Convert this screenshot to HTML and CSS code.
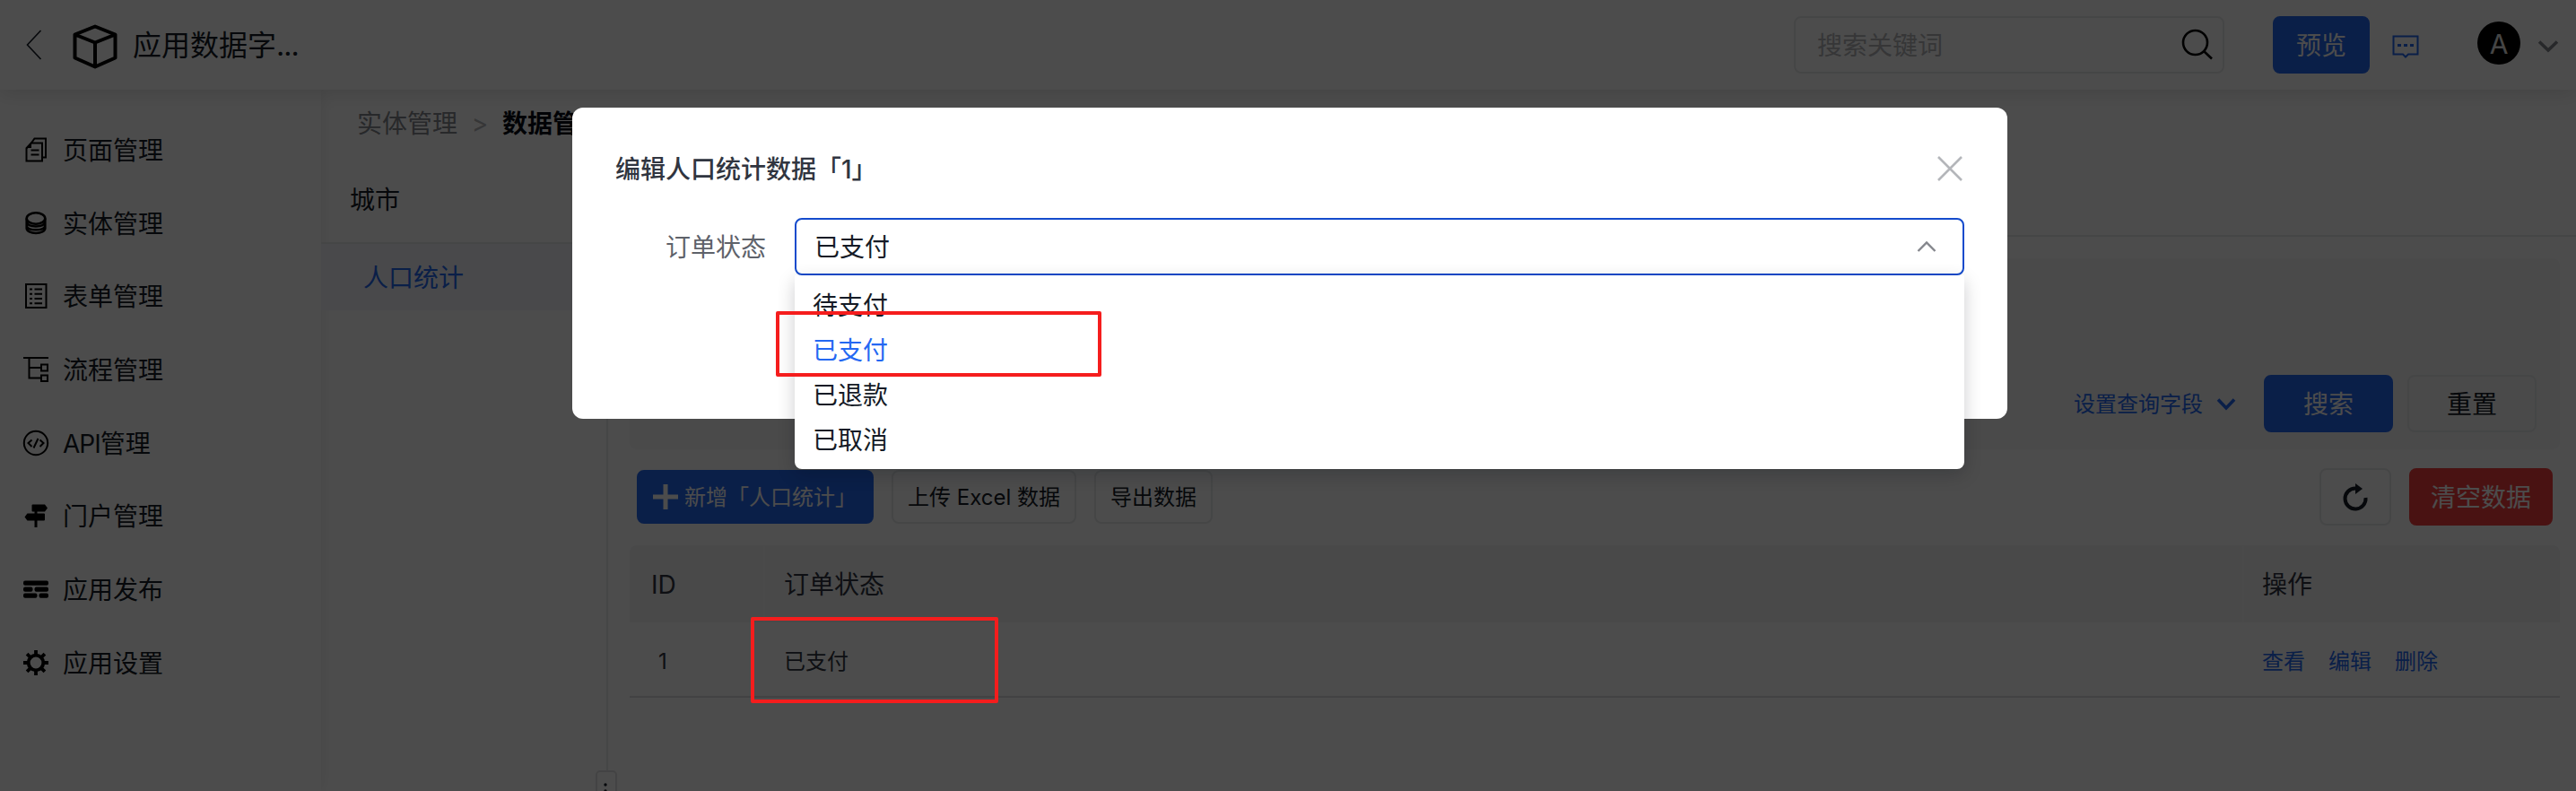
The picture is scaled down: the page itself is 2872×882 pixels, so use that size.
FILE: index.html
```html
<!DOCTYPE html>
<html lang="zh-CN">
<head>
<meta charset="utf-8">
<title>应用数据字典</title>
<link rel="stylesheet" href="styles.css">
</head>
<body>
<div class="app">
  <header class="topbar">
    <svg class="back" viewBox="0 0 18 34"><path d="M16.500 1 1.500 17l15 16"/></svg>
    <svg class="cube" viewBox="0 0 50 50"><path d="M25 2.500 47.500 11.500v26L25 47.500 2.500 37.500v-26zM2.500 11.500 25 20.500l22.500-9M25 20.500v27"/></svg>
    <span class="app-title">应用数据字<span class="tight">...</span></span>
    <div class="search">
      <span>搜索关键词</span>
      <svg viewBox="0 0 36 36"><circle cx="15.500" cy="15.500" r="13.500"/><path d="m25 25 9 8.500"/></svg>
    </div>
    <button class="btn primary preview">预览</button>
    <svg class="message" viewBox="0 0 30 27"><path d="M1.500 1.500h27v20h-10.500l-3 3-3-3h-10.500z"/><path class="dots" d="M6 10h4v3H6zM13 10h4v3h-4zM20 10h4v3h-4z"/></svg>
    <span class="avatar">A</span>
    <svg class="caret" viewBox="0 0 24 16"><path d="m2 2.500 10 9.500 10-9.500"/></svg>
  </header>
  <div class="body">
    <nav class="sidebar">
      <a class="nav-item"><svg viewBox="0 0 28 28"><path d="M8.500 6.500V7L12.500 1.500h12.500v21h-4M9 6.500h12v20H3.500v-14z"/><path class="solid" d="M2.500 12 9 5v7z"/><path d="M8.500 14.500h9M8.500 19.500h9"/></svg><span>页面管理</span></a>
      <a class="nav-item"><svg class="bold" viewBox="0 0 28 28"><ellipse cx="14" cy="8.500" rx="10.300" ry="6.300"/><path d="M3.700 8.500v11c0 3 4.500 5.500 10.300 5.500s10.300-2.500 10.300-5.500v-11M3.700 12.500c1 4 5.500 5 10.300 5s9.300-1 10.300-5M3.700 17c1 3.500 5.500 4.300 10.300 4.300s9.300-.8 10.300-4.300"/></svg><span>实体管理</span></a>
      <a class="nav-item"><svg viewBox="0 0 28 28"><path d="M3 1h22.500v26H3zM7 6.500h3M12.500 6.500H21M7 11.800h3M12.500 11.800H21M7 17h3M12.500 17H21M7 22.300h3M12.500 22.300H21"/></svg><span>表单管理</span></a>
      <a class="nav-item"><svg viewBox="0 0 28 28"><path d="M0 1h28M6.500 1v22.500H20M6.500 12H20M20 8.500h7v7h-7zM20 20.500h7v6.500h-7z"/></svg><span>流程管理</span></a>
      <a class="nav-item"><svg viewBox="0 0 28 28"><circle cx="14" cy="14" r="13.200"/><path d="M9.500 10.500 5.500 14l4 4M18.500 10.500l4 3.500-4 4M16.500 9 11.500 19.500"/></svg><span><span class="tight">API</span>管理</span></a>
      <a class="nav-item"><svg viewBox="0 0 28 28"><path class="solid" d="M10.500 1.500h13.500l3 4-3 4H10.500q-1 0-1-1v-6q0-1 1-1zM4.500 11.500H23q1 0 1 1v6q0 1-1 1H4.500L1.500 15.500zM12.500 8h3v19h-3z"/></svg><span>门户管理</span></a>
      <a class="nav-item"><svg viewBox="0 0 28 28"><g class="solid"><rect y="4.500" width="28" height="5.300" rx="2"/><rect y="11.500" width="10.500" height="5.300" rx="2"/><rect x="12.500" y="11.500" width="15.500" height="5.300" rx="2"/><rect y="18.500" width="15.500" height="5.300" rx="2"/><rect x="17.500" y="18.500" width="10.500" height="5.300" rx="2"/></g></svg><span>应用发布</span></a>
      <a class="nav-item"><svg class="gear" viewBox="0 0 28 28"><circle cx="14" cy="14" r="8.300"/><path d="M14 0v5M14 23v5M0 14h5M23 14h5M4.100 4.100 7.800 7.800M20.200 20.200l3.700 3.700M4.100 23.900l3.700-3.700M20.200 7.800l3.700-3.700"/></svg><span>应用设置</span></a>
    </nav>
    <div class="main">
      <div class="breadcrumb"><span>实体管理</span><i>&gt;</i><b>数据管理</b></div>
      <div class="workspace">
        <aside class="entities">
          <div class="entity-head">城市</div>
          <div class="entity-active">人口统计</div>
          <div class="handle"><svg viewBox="0 0 4 16"><circle cx="2" cy="2" r="1.700"/><circle cx="2" cy="9" r="1.700"/></svg></div>
        </aside>
        <section class="content">
          <div class="tab-strip"></div>
          <div class="query">
            <span class="fields">设置查询字段</span>
            <svg class="fields-caret" viewBox="0 0 22 16"><path d="m2 2.500 9 9.500 9-9.500"/></svg>
            <button class="btn primary wide">搜索</button>
            <button class="btn wide">重置</button>
          </div>
          <div class="toolbar">
            <button class="btn primary small add"><svg viewBox="0 0 28 28"><path d="M14 0v28M0 14h28"/></svg>新增「人口统计」</button>
            <button class="btn small">上传 Excel 数据</button>
            <button class="btn small">导出数据</button>
            <span class="spacer"></span>
            <button class="btn refresh"><svg viewBox="0 0 28 30"><path d="M25.500 16A11.500 11.500 0 1 1 14 5.500h2"/><path class="head" d="M14 0l8 6-8 6z"/></svg></button>
            <button class="btn danger">清空数据</button>
          </div>
          <div class="table">
            <div class="row head-row"><span class="c-id">ID</span><span class="c-state">订单状态</span><span class="c-op">操作</span></div>
            <div class="row data-row"><span class="c-id">1</span><span class="c-state">已支付</span><span class="c-op"><a>查看</a><a>编辑</a><a>删除</a></span></div>
          </div>
        </section>
      </div>
    </div>
  </div>
</div>
<div class="mask">
  <div class="modal">
    <div class="modal-head">
      <span>编辑人口统计数据「1」</span>
      <svg viewBox="0 0 28 28"><path d="m1 1 26 26M27 1 1 27"/></svg>
    </div>
    <div class="field">
      <label>订单状态</label>
      <div class="select">
        <span>已支付</span>
        <svg viewBox="0 0 22 14"><path d="m1.500 12 9.500-9.500 9.500 9.500"/></svg>
        <div class="menu">
          <div>待支付</div>
          <div class="on">已支付</div>
          <div>已退款</div>
          <div>已取消</div>
        </div>
      </div>
    </div>
  </div>
</div>
<div class="mark mark-option"></div>
<div class="mark mark-cell"></div>
</body>
</html>
```
FILE: styles.css
```css
* { box-sizing: border-box; }
body {
  margin: 0;
  width: 2872px;
  height: 882px;
  overflow: hidden;
  position: relative;
  font-family: Inter, "Noto Sans CJK SC", sans-serif;
  font-size: 28px;
  line-height: 40px;
  color: #151b26;
  background: #fff;
}
svg { display: block; flex: none; fill: none; stroke: currentColor; overflow: visible; }
.tight { letter-spacing: -1px; }
.app { width: 2872px; height: 882px; display: flex; flex-direction: column; }

.topbar {
  height: 100px;
  flex: none;
  display: flex;
  align-items: center;
  padding: 0 19px 0 29px;
  position: relative;
  z-index: 2;
  background: #fff;
  box-shadow: 0 4px 20px rgba(0, 0, 0, .12);
}
.back { width: 18px; height: 34px; stroke-width: 1.6; margin-right: 34px; }
.cube { width: 50px; height: 50px; stroke-width: 4; stroke-linejoin: round; margin: 3px 17px 0 0; color: #000; }
.app-title { font-size: 32px; padding-top: 2px; }
.search {
  width: 480px;
  height: 64px;
  margin-left: auto;
  margin-right: 54px;
  padding: 0 10px 0 24px;
  display: flex;
  align-items: center;
  justify-content: space-between;
  border: 2px solid #e8e9eb;
  border-radius: 8px;
  color: #b4b6ba;
}
.search span { padding-top: 2px; }
.search svg { width: 36px; height: 36px; stroke-width: 2.6; color: #000; }
.message { width: 30px; height: 27px; margin: 5px 65px 0 25px; color: #2468f2; stroke-width: 2; }
.message .dots { fill: currentColor; stroke: none; }
.avatar {
  width: 48px;
  height: 48px;
  margin: -4px 19px 0 0;
  padding-top: 1px;
  font-size: 30px;
  line-height: 48px;
  text-align: center;
  border-radius: 50%;
  background: #000;
  color: #e8e8e8;
}
.caret { width: 24px; height: 16px; margin-top: 4px; color: #84868c; stroke-width: 3.6; }

.btn {
  height: 64px;
  padding: 2px 0 0;
  flex: none;
  display: flex;
  align-items: center;
  justify-content: center;
  font: inherit;
  color: #151b26;
  background: #fff;
  border: 2px solid #e8e9eb;
  border-radius: 8px;
}
.primary { background: #2468f2; border-color: #2468f2; color: #fff; }
.danger { width: 160px; background: #f33e3e; border-color: #f33e3e; color: #fff; }
.preview { width: 108px; }
.wide { width: 144px; }
.small { height: 60px; padding: 2px 16px 0; font-size: 24px; }
.small + .small { margin-left: 20px; }
.add { width: 264px; padding: 2px 0 0 16px; justify-content: flex-start; }
.add svg { width: 28px; height: 28px; margin: -2px 7px 0 0; stroke-width: 5; }
.refresh { width: 80px; margin-right: 20px; }
.refresh svg { width: 28px; height: 30px; margin-top: -3px; stroke-width: 4; }
.refresh .head { fill: currentColor; stroke: none; }

.body { flex: 1; min-height: 0; display: flex; }
.sidebar {
  width: 358px;
  flex: none;
  padding: 26px 0 0 26px;
  box-shadow: 0 0 16px rgba(0, 0, 0, .08);
}
.nav-item { height: 81.700px; display: flex; align-items: center; gap: 16px; }
.nav-item > span { padding-top: 2px; }
.nav-item svg { width: 28px; height: 28px; stroke-width: 2; color: #000; }
.nav-item .bold { stroke-width: 2.6; }
.nav-item .gear { stroke-width: 3.8; }
.nav-item .solid { fill: currentColor; stroke: none; }

.main { flex: 1; min-width: 0; display: flex; flex-direction: column; }
.breadcrumb { height: 72px; flex: none; padding: 18px 0 0 40px; display: flex; color: #84868c; }
.breadcrumb i { width: 50px; text-align: center; font-style: normal; color: #b4b6ba; }
.breadcrumb b { color: #070c14; font-weight: 700; }
.workspace { flex: 1; min-height: 0; display: flex; }
.entities { width: 320px; flex: none; border-right: 2px solid #e8e9eb; position: relative; }
.entity-head { height: 100px; padding: 31px 0 0 32px; border-bottom: 2px solid #e8e9eb; }
.entity-active { height: 74px; padding: 1px 0 0 47px; line-height: 74px; color: #2468f2; background: #f5f6fa; }
.handle {
  position: absolute;
  right: -12px;
  bottom: -17px;
  width: 24px;
  height: 40px;
  padding: 12px 0 0 7px;
  border: 2px solid #e0e1e3;
  border-radius: 5px;
  background: #fff;
}
.handle svg { width: 4px; height: 16px; fill: #151b26; stroke: none; }
.content { flex: 1; min-width: 0; }
.tab-strip { height: 92px; border-bottom: 2px solid #e8e9eb; }
.query {
  height: 213px;
  margin: 24px 18px 0 24px;
  padding: 0 26px 19px 0;
  display: flex;
  align-items: flex-end;
  justify-content: flex-end;
  background: #f7f7f9;
  border-radius: 8px;
}
.query .btn + .btn { margin-left: 16px; background: transparent; }
.fields { font-size: 24px; line-height: 62px; color: #2468f2; }
.fields-caret { width: 22px; height: 16px; margin: 0 31px 23px 15px; color: #2468f2; stroke-width: 3.600; }
.toolbar { height: 107px; padding: 21px 26px 0 32px; display: flex; align-items: flex-start; }
.toolbar > .small { margin-top: 2px; }
.spacer { flex: 1; }
.table { margin: 0 18px 0 24px; }
.row { display: flex; align-items: stretch; }
.row > span { display: flex; align-items: center; padding-top: 2px; }
.row > .c-id { width: 151px; padding-left: 24px; }
.row > .c-state { width: 1649px; padding-left: 21px; }
.row > .c-op { flex: 1; padding-left: 20px; }
.head-row { height: 86px; color: #303540; background: #f3f4f6; border-radius: 8px 8px 0 0; }
.head-row .c-id, .head-row .c-state { border-right: 2px solid #f8f8f9; }
.data-row { height: 84px; font-size: 24px; color: #303540; border-bottom: 2px solid #dcdde0; }
.data-row > span { padding-top: 5px; }
.data-row > .c-id { padding-left: 32px; }
.data-row .c-op { gap: 26px; color: #2468f2; }

.mask { position: absolute; inset: 0; z-index: 5; background: rgba(0, 0, 0, .7); display: flex; justify-content: center; align-items: flex-start; padding: 120px 0 0 4px; }
.modal { width: 1600px; height: 347px; padding: 48px; background: #fff; border-radius: 12px; }
.modal-head { height: 75px; display: flex; justify-content: space-between; align-items: flex-start; font-weight: 500; color: #303540; }
.modal-head > span { padding-top: 1px; }
.modal-head svg { width: 28px; height: 28px; margin: 6px 2px 0 0; color: #b4b6ba; stroke-width: 2.600; }
.field { display: flex; align-items: center; }
.field label { width: 200px; padding: 2px 0 0 56px; color: #5e626a; }
.select {
  flex: 1;
  height: 64px;
  padding: 0 29px 0 20px;
  position: relative;
  display: flex;
  align-items: center;
  justify-content: space-between;
  border: 2px solid #144bcc;
  border-radius: 8px;
}
.select > span { padding-top: 2px; }
.select > svg { width: 22px; height: 14px; color: #84868c; stroke-width: 2.400; }
.menu {
  position: absolute;
  left: -2px;
  right: -2px;
  top: 62px;
  height: 216px;
  padding: 9px 20px;
  line-height: 50px;
  background: #fff;
  border-radius: 0 0 8px 8px;
  box-shadow: 0 6px 20px rgba(7, 12, 20, .2);
}
.menu .on { color: #2468f2; }
.mark { position: absolute; z-index: 9; border: 4px solid #f51d1d; border-radius: 2px; }
.mark-option { left: 865px; top: 347px; width: 363px; height: 73px; }
.mark-cell { left: 837px; top: 688px; width: 276px; height: 96px; }
```
